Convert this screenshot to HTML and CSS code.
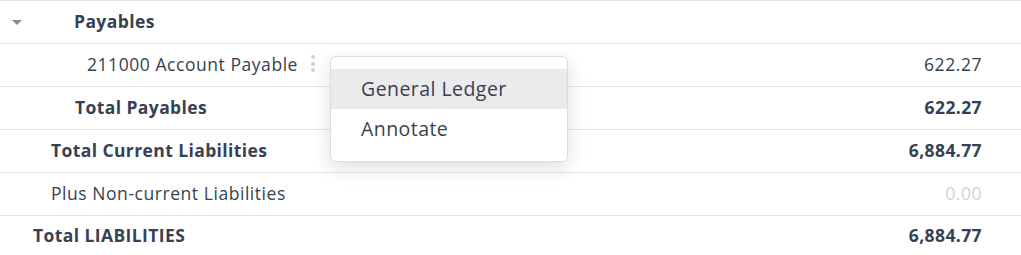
FILE: index.html
```html
<!DOCTYPE html>
<html>
<head>
<meta charset="utf-8">
<link rel="stylesheet" href="styles.css">
</head>
<body>
<div class="report">
  <div class="row">
    <div class="name lvl-1">
      <span class="caret"></span>
      <span class="label bold">Payables</span>
    </div>
  </div>
  <div class="row">
    <div class="name lvl-2">
      <span class="label">211000 Account Payable</span>
      <span class="kebab"><i></i><i></i><i></i></span>
    </div>
    <div class="value">622.27</div>
  </div>
  <div class="row">
    <div class="name lvl-1">
      <span class="label bold">Total Payables</span>
    </div>
    <div class="value bold">622.27</div>
  </div>
  <div class="row">
    <div class="name lvl-0">
      <span class="label bold">Total Current Liabilities</span>
    </div>
    <div class="value bold">6,884.77</div>
  </div>
  <div class="row">
    <div class="name lvl-0">
      <span class="label">Plus Non-current Liabilities</span>
    </div>
    <div class="value muted">0.00</div>
  </div>
  <div class="row last">
    <div class="name lvl-top">
      <span class="label bold">Total LIABILITIES</span>
    </div>
    <div class="value bold">6,884.77</div>
  </div>

  <div class="menu">
    <div class="menu-item active">General Ledger</div>
    <div class="menu-item">Annotate</div>
  </div>
</div>
</body>
</html>
```

FILE: styles.css
```css
html, body {
  margin: 0;
  padding: 0;
  background: #ffffff;
}

body {
  font-family: "Open Sans", "Noto Sans", sans-serif;
  font-size: 17.5px;
  letter-spacing: 0.55px;
  color: #374151;
}

.report {
  position: relative;
  width: 1021px;
}

.row {
  display: flex;
  align-items: center;
  box-sizing: border-box;
  height: 43px;
  padding-bottom: 2px;
  border-top: 1px solid #e2e4e7;
}

.row.last {
  height: 41px;
}

.name {
  display: flex;
  align-items: center;
  flex: 1;
}

.lvl-top { padding-left: 33px; }
.lvl-0 { padding-left: 51px; }
.lvl-1 { padding-left: 12px; }
.lvl-2 { padding-left: 87px; }

.lvl-1 .caret + .label { margin-left: 52px; }
.lvl-1 .label:first-child { margin-left: 63px; }

.caret {
  width: 0;
  height: 0;
  border-left: 5.5px solid transparent;
  border-right: 5.5px solid transparent;
  border-top: 5px solid #8a8a8a;
  margin-top: 2px;
}

.bold {
  font-weight: 700;
  letter-spacing: 0.4px;
}

.kebab {
  display: flex;
  flex-direction: column;
  gap: 2.5px;
  margin-left: 13px;
  margin-top: -1px;
}

.kebab i {
  display: block;
  width: 4px;
  height: 4px;
  border-radius: 50%;
  background: #cdd0d4;
}

.value {
  padding-right: 39px;
  text-align: right;
}

.muted {
  color: #cfd2d6;
}

.menu {
  position: absolute;
  left: 330px;
  top: 56px;
  width: 236px;
  padding: 12px 0;
  background: #ffffff;
  border: 1px solid #dcdde0;
  border-radius: 6px;
  box-shadow: 0 6px 20px rgba(0, 0, 0, 0.13);
}

.menu-item {
  height: 40px;
  line-height: 40px;
  padding-left: 30px;
  font-size: 19.5px;
  letter-spacing: 0.45px;
}

.menu-item.active {
  background: #ebebeb;
}
```
